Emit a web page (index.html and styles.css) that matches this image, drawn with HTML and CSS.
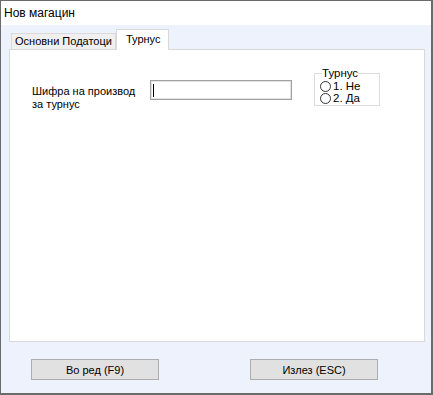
FILE: index.html
```html
<!DOCTYPE html>
<html>
<head>
<title>Нов магацин</title>
<link rel="stylesheet" href="styles.css">
</head>
<body>

  <div class="window">
    <div class="titlebar">Нов магацин</div>

    <div class="client">
      <div class="tabs">
        <div class="tab">Основни Податоци</div>
        <div class="tab active">Турнус</div>
      </div>

      <div class="panel">
        <div class="form-row">
          <label class="field-label">Шифра на производ<br>за турнус</label>
          <div class="text-input"><span class="caret"></span></div>
          <fieldset class="group">
            <legend>Турнус</legend>
            <div class="radio"><span class="circle"></span>1. Не</div>
            <div class="radio"><span class="circle"></span>2. Да</div>
          </fieldset>
        </div>
      </div>

      <div class="buttons">
        <button class="btn">Во ред (F9)</button>
        <button class="btn">Излез (ESC)</button>
      </div>
    </div>
  </div>

</body>
</html>
```

FILE: styles.css
```css
:root {
  --window-border: #6b6b6b;
  --client-bg: #edf2fc;
  --tab-border: #d9d9d9;
  --tab-bg: #f0f0f0;
  --btn-bg: #e1e1e1;
  --btn-border: #adadad;
  --text-color: #000;
}

body {
  margin: 0;
  font-family: 'Liberation Sans', Arial, sans-serif;
  font-size: 11px;
  color: var(--text-color);
}

.window {
  width: 433px;
  height: 395px;
  box-sizing: border-box;
  border: 1px solid var(--window-border);
  border-right-width: 2px;
  border-bottom-width: 2px;
  display: flex;
  flex-direction: column;
}

.titlebar {
  height: 24px;
  background: #fff;
  padding: 4px 0 0 3px;
  box-sizing: border-box;
  font-size: 12px;
  line-height: 16px;
}

.client {
  flex: 1;
  background: var(--client-bg);
  padding: 4px 6px 0 8px;
}

/* Tab strip */
.tabs {
  display: flex;
  align-items: flex-end;
  height: 20px;
  padding-left: 2px;
}

.tab {
  height: 16px;
  box-sizing: border-box;
  border: 1px solid var(--tab-border);
  border-bottom: none;
  background: var(--tab-bg);
  padding: 0 3px;
  line-height: 15px;
  font-size: 11px;
}

.tab.active {
  height: 21px;
  margin-bottom: -1px;
  background: #fff;
  padding: 2px 8px 0 9px;
  position: relative;
  z-index: 1;
}

.panel {
  height: 293px;
  box-sizing: border-box;
  border: 1px solid var(--tab-border);
  background: #fff;
  padding: 17px 0 0 22px;
}

.form-row {
  display: flex;
  align-items: flex-start;
}

.field-label {
  width: 118px;
  margin-top: 18px;
  font-size: 11px;
  line-height: 13px;
}

.text-input {
  width: 142px;
  height: 20px;
  margin-top: 13px;
  box-sizing: border-box;
  border: 1px solid #a0a0a0;
  box-shadow: inset 0 0 0 1px #e3e3e3;
  background: #fff;
  padding: 3px 0 0 2px;
}

.caret {
  display: block;
  width: 1px;
  height: 13px;
  background: #000;
}

/* Group box */
.group {
  margin: 0 0 0 22px;
  padding: 0 0 1px 5px;
  width: 66px;
  box-sizing: border-box;
  border: 1px solid #dcdcdc;
}

.group legend {
  padding: 0;
  margin-left: 2px;
  font-size: 11.5px;
  line-height: 12px;
}

.radio {
  display: flex;
  align-items: center;
  height: 12px;
  font-size: 11.5px;
  line-height: 12px;
}

.radio:first-of-type {
  margin-top: 1px;
}

.circle {
  width: 11px;
  height: 11px;
  box-sizing: border-box;
  border: 1px solid #333;
  border-radius: 50%;
  margin-right: 2px;
  background: #fff;
}

/* Bottom buttons */
.buttons {
  display: flex;
  gap: 91px;
  padding: 17px 0 0 22px;
}

.btn {
  width: 128px;
  height: 21px;
  background: var(--btn-bg);
  border: 1px solid var(--btn-border);
  font-family: 'Liberation Sans', Arial, sans-serif;
  font-size: 11px;
  color: var(--text-color);
  padding: 0;
}
```
